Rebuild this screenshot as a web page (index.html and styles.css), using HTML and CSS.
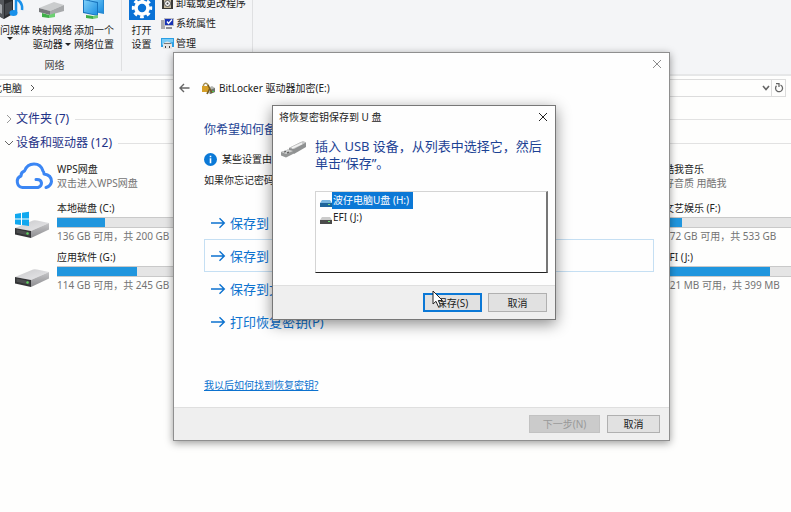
FILE: index.html
```html
<!DOCTYPE html>
<html lang="zh-CN">
<head>
<meta charset="utf-8">
<title>此电脑</title>
<link rel="stylesheet" href="styles.css">
</head>
<body>
<svg class="defs" aria-hidden="true">
  <defs>
    <linearGradient id="metal" x1="0" y1="0" x2="1" y2="1"><stop offset="0" stop-color="#c9c9cb"/><stop offset="1" stop-color="#e9e9eb"/></linearGradient>
    <linearGradient id="side" x1="0" y1="0" x2="0" y2="1"><stop offset="0" stop-color="#c6c6c8"/><stop offset="1" stop-color="#8d8d90"/></linearGradient>
    <linearGradient id="screen" x1="0" y1="0" x2="1" y2="1"><stop offset="0" stop-color="#7ed0fa"/><stop offset="1" stop-color="#1d8fe0"/></linearGradient>
    <symbol id="drive" viewBox="0 0 34 18">
      <path d="M0 8 18 0.5Q20 0 22 .6L34 3 16 11Z" fill="url(#metal)"/>
      <path d="M0 8 16 11V18L0 14.5Z" fill="#333436"/>
      <path d="M16 11 34 3V9.500L16 18Z" fill="url(#side)"/>
      <path d="M1.500 9.500 14.500 12.200V15.800L1.500 12.800Z" fill="#4d4f50"/>
      <circle cx="12.500" cy="13.500" r="1.200" fill="#5fd35f"/>
    </symbol>
    <symbol id="arrow" viewBox="0 0 16 12"><path d="M1 6H14M9.500 1.300 14.300 6 9.500 10.700" fill="none" stroke="currentColor" stroke-width="1.400"/></symbol>
    <symbol id="cross" viewBox="0 0 10 10"><path d="M1 1 9 9M9 1 1 9" fill="none" stroke="currentColor"/></symbol>
  </defs>
</svg>

<main class="explorer">
  <div class="ribbon">
    <section class="group network">
      <div class="tools">
        <button class="tool">
          <svg width="32" height="26" viewBox="0 0 32 26"><path d="M1 0H19V20L10 25 1 20Z" fill="#2b2d30"/><path d="M1 0 10 5V25L1 20Z" fill="#55585c"/><path d="M3 8 8 11V20L3 17Z" fill="#a5a8ac"/><path d="M11 10 18 7V18L11 22Z" fill="#45484c"/><path d="M22 4V19M22 5Q29 8 28 16" fill="none" stroke="#1991ea" stroke-width="2.500"/><ellipse cx="19.500" cy="19" rx="4" ry="3" fill="#1991ea"/></svg>
          <span>访问媒体</span><i class="caret"></i>
        </button>
        <button class="tool">
          <svg width="26" height="26" viewBox="0 0 26 26"><path d="M0 14 15 8 25 11 11 17Z" fill="#cacccd"/><path d="M0 14 11 17V21L0 18Z" fill="#77797c"/><path d="M11 17 25 11V17L11 21Z" fill="#a7a9ab"/><path d="M3 19 10 21V24L3 23Z" fill="#3fae48"/><path d="M10 21 16 19V23L10 24Z" fill="#6bd071"/></svg>
          <span>映射网络<br>驱动器 <i class="caret inline"></i></span>
        </button>
        <button class="tool">
          <svg width="26" height="26" viewBox="0 0 26 26"><path d="M8 3 23 5V20L8 17Z" fill="#2689d2"/><path d="M9 4 22 6V18L9 16Z" fill="url(#screen)"/><path d="M2 5 17 8V22L2 19Z" fill="#1874bd"/><path d="M3 6 16 9V21L3 18Z" fill="url(#screen)"/><path d="M5 21 12 22V25L5 24Z" fill="#3fae48"/><path d="M12 22 17 21V24L12 25Z" fill="#75cc79"/></svg>
          <span>添加一个<br>网络位置</span>
        </button>
      </div>
      <div class="caption">网络</div>
    </section>
    <section class="group system">
      <button class="tool">
        <svg width="26" height="26" viewBox="0 0 26 26"><path d="M0 0H26V26H0Z" fill="#0a72d6"/><circle cx="13" cy="14" r="6" fill="none" stroke="#fff" stroke-width="3.600"/><circle cx="13" cy="14" r="8.500" fill="none" stroke="#fff" stroke-width="3.400" stroke-dasharray="3.600 3.076" stroke-dashoffset="1.800"/></svg>
        <span>打开<br>设置</span>
      </button>
      <div class="links">
        <button class="link-tool"><svg width="13" height="13" viewBox="0 0 13 13"><path d="M1 0H12V12H1Z" fill="#3b3a36"/><path d="M3 2H10V11H3Z" fill="#c8bda0"/><circle cx="6.500" cy="6.500" r="3" fill="#f5f5f5" stroke="#555"/><circle cx="6.500" cy="6.500" r="1" fill="#444"/></svg>卸载或更改程序</button>
        <button class="link-tool"><svg width="13" height="13" viewBox="0 0 13 13"><path d="M0 3H4V12H0Z" fill="#a9a9ad"/><path d="M3 1H13V9H3Z" fill="#b7b8c0"/><path d="M4 2H12V8H4Z" fill="#1732b4"/><path d="M6 4.500 7.500 6.500 11 2.500" fill="none" stroke="#fff" stroke-width="1.300"/><path d="M5 10H11V12H5Z" fill="#8c8d94"/></svg>系统属性</button>
        <button class="link-tool"><svg width="13" height="13" viewBox="0 0 13 13"><path d="M0 1H13V10H0Z" fill="#2b9fe4"/><path d="M1 2H12V5L1 8Z" fill="#79cbf5"/><path d="M2 7Q6 2 11 7V12H2Z" fill="#e5e5e5"/><path d="M4 9H5V11H4ZM8 9H9V11H8Z" fill="#444"/><path d="M3 6H10V7H3Z" fill="#777"/></svg>管理</button>
      </div>
    </section>
  </div>

  <nav class="address">
    <span class="crumb">此电脑</span>
    <svg width="6" height="8" viewBox="0 0 6 8"><path d="M1 1 4 4 1 7" fill="none" stroke="#555"/></svg>
    <button class="drop" aria-label="历史"><svg width="8" height="6" viewBox="0 0 8 6"><path d="M1 1 4 4.500 7 1" fill="none" stroke="#666" stroke-width="1.600"/></svg></button>
    <button class="refresh" aria-label="刷新"><svg width="10" height="10" viewBox="0 0 10 10"><path d="M6.500 2A3.500 3.500 0 1 1 2.500 2.800M2 .7H5V4" fill="none" stroke="#666" stroke-width="1.300"/></svg></button>
  </nav>

  <h2 class="header"><svg width="10" height="10" viewBox="0 0 10 10"><path d="M3 1 7 5 3 9" fill="none" stroke="#999"/></svg>文件夹 (7)</h2>
  <h2 class="header"><svg width="10" height="10" viewBox="0 0 10 10"><path d="M1 3 5 7 9 3" fill="none" stroke="#666"/></svg>设备和驱动器 (12)</h2>

  <div class="drives">
    <article class="item">
      <svg width="38" height="28" viewBox="0 0 38 28"><path d="M15 25.500H7.500A6 6 0 0 1 6 14Q6 10 9.500 9Q12 2 19 2Q26 2 28 9Q29 10 29 12Q36.500 13 36.500 19.500Q36 24 31 25.500M14 25.500H23Q26.500 24.500 26.500 21Q26 17 21 17.500" fill="none" stroke="#3b86f4" stroke-width="3" stroke-linecap="round" stroke-linejoin="round"/></svg>
      <div class="info"><div class="name">WPS网盘</div><div class="note">双击进入WPS网盘</div></div>
    </article>
    <article class="item last">
      <div class="info"><div class="name">酷我音乐</div><div class="note">好音质 用酷我</div></div>
    </article>
    <article class="item">
      <svg class="disk" width="34" height="28" viewBox="0 0 34 28"><use href="#drive" y="9" width="34" height="18"/><path d="M0 3 6 2V7.500H0ZM7 1.800 14 .7V7.500H7ZM0 8.500H6V14L0 13.200ZM7 8.500H14V15L7 14Z" fill="#10a8ef"/></svg>
      <div class="info"><div class="name">本地磁盘 (C:)</div><div class="bar"><div class="fill" style="width:32%"></div></div><div class="note">136 GB 可用，共 200 GB</div></div>
    </article>
    <article class="item last">
      <div class="info"><div class="name">文艺娱乐 (F:)</div><div class="bar"><div class="fill" style="width:12%"></div></div><div class="note">472 GB 可用，共 533 GB</div></div>
    </article>
    <article class="item">
      <svg class="disk" width="34" height="28" viewBox="0 0 34 28"><use href="#drive" y="9" width="34" height="18"/></svg>
      <div class="info"><div class="name">应用软件 (G:)</div><div class="bar"><div class="fill" style="width:53%"></div></div><div class="note">114 GB 可用，共 245 GB</div></div>
    </article>
    <article class="item last">
      <div class="info"><div class="name">EFI (J:)</div><div class="bar"><div class="fill" style="width:70%"></div></div><div class="note">121 MB 可用，共 399 MB</div></div>
    </article>
  </div>
</main>

<section class="window wizard" role="dialog" aria-label="BitLocker 驱动器加密">
  <button class="close" aria-label="关闭"><svg width="10" height="10"><use href="#cross"/></svg></button>
  <header class="wizard-title">
    <button class="back" aria-label="返回"><svg width="11" height="10" viewBox="0 0 11 10"><path d="M10.500 5H1.500M5 1 1 5 5 9" fill="none" stroke="#666" stroke-width="1.400"/></svg></button>
    <svg width="13" height="13" viewBox="0 0 13 13"><path d="M4 7 10 4 13 6V10L8 12 4 10Z" fill="#b4b6b3"/><path d="M8 8 13 6V10L8 12Z" fill="#6d736d"/><path d="M1.500 5V3Q3.500-.5 6 3V5" fill="none" stroke="#a3905a" stroke-width="1.500"/><path d="M0 4H7V10H0Z" fill="#d59f27"/><path d="M6 3 10 11M8 6 5 12" stroke="#765d22" stroke-width="1.600"/><path d="M10 9H12V10H10Z" fill="#4bc64b"/></svg>
    <span>BitLocker 驱动器加密(E:)</span>
  </header>
  <div class="wizard-body">
    <h1>你希望如何备份恢复密钥?</h1>
    <p class="managed"><svg width="13" height="13" viewBox="0 0 13 13"><circle cx="6.500" cy="6.500" r="6.500" fill="#0b79d7"/><path d="M5.700 5.300H7.300V10.300H5.700ZM5.700 2.700H7.300V4.200H5.700Z" fill="#fff"/></svg>某些设置由系统管理员管理。</p>
    <p class="hint">如果你忘记密码或者丢失智能卡，可以使用恢复密钥访问驱动器。</p>
    <div class="options">
      <button class="option"><svg width="16" height="12"><use href="#arrow"/></svg>保存到 Microsoft 帐户(M)</button>
      <button class="option selected"><svg width="16" height="12"><use href="#arrow"/></svg>保存到 U 盘(U)</button>
      <button class="option"><svg width="16" height="12"><use href="#arrow"/></svg>保存到文件(F)</button>
      <button class="option"><svg width="16" height="12"><use href="#arrow"/></svg>打印恢复密钥(P)</button>
    </div>
    <a class="help" href="#">我以后如何找到恢复密钥?</a>
  </div>
  <footer class="wizard-footer"><button class="push next" disabled>下一步(N)</button><button class="push">取消</button></footer>
</section>

<section class="window picker" role="dialog" aria-label="将恢复密钥保存到 U 盘">
  <header class="picker-title"><span>将恢复密钥保存到 U 盘</span><button class="close-dark" aria-label="关闭"><svg width="10" height="10"><use href="#cross"/></svg></button></header>
  <div class="picker-body">
    <svg width="26" height="18" viewBox="0 0 26 18"><path d="M8 7 20 1Q22 0 25 1.500V6L13 13 8 11Z" fill="#8f9192"/><path d="M8 7 20 1Q22 0 25 1.500L13 8Z" fill="#c8c9c9"/><path d="M11 7 21 2.500" stroke="#f3f3f3" stroke-width="1.500"/><path d="M0 11 7 8.500 12 10V13L5 16.500 0 14.500Z" fill="#949696"/><path d="M0 11 7 8.500 12 10 5 13Z" fill="#cecfcf"/><path d="M3 11 5 10.500M6 12 8 11" stroke="#555" stroke-width="1.200"/></svg>
    <div class="picker-main">
      <h1>插入 USB 设备，从列表中选择它，然后单击“保存”。</h1>
      <ul class="devices" role="listbox" aria-label="USB 设备">
        <li role="option" aria-selected="true"><svg width="12" height="8" viewBox="0 0 12 8"><path d="M2 1H10L12 4H0Z" fill="#78b5df"/><path d="M0 4H12V8H0Z" fill="#1e659b"/><path d="M8 5H10V6H8Z" fill="#78dc7b"/></svg><span>波仔电脑U盘 (H:)</span></li>
        <li role="option" aria-selected="false"><svg width="12" height="8" viewBox="0 0 12 8"><path d="M2 1H10L12 4H0Z" fill="#cbcbcb"/><path d="M0 4H12V8H0Z" fill="#4b4b4b"/><path d="M8 5H10V6H8Z" fill="#6ddd71"/></svg><span>EFI (J:)</span></li>
      </ul>
    </div>
  </div>
  <footer class="picker-footer"><button class="push primary">保存(S)</button><button class="push">取消</button></footer>
</section>

<svg class="pointer" width="13" height="18" viewBox="0 0 13 18" aria-hidden="true"><path d="M1 1V14L4 11.300 6.300 16.500 8.500 15.500 6.300 10.500H10.500Z" fill="#fff" stroke="#222"/></svg>
</body>
</html>
```
FILE: styles.css
```css
* { box-sizing: border-box; }

body {
  margin: 0;
  min-height: 100vh;
  overflow: hidden;
  background: #fefefd;
  color: #222;
  font: 10px/14px "Noto Sans", "Noto Sans CJK SC", sans-serif;
}

h1, h2, p, ul { margin: 0; padding: 0; font-weight: 400; }
svg { flex: none; display: block; }
button { margin: 0; padding: 0; border: 0; background: none; color: inherit; font: inherit; }
.defs { position: absolute; width: 0; height: 0; }

/* Explorer */
.explorer { overflow: hidden; }

.ribbon {
  display: flex;
  height: 76px;
  padding-bottom: 3px;
  overflow: hidden;
  background: #f4f5f7;
  border-bottom: 2px solid #e6e7e8;
}
.group { border-right: 1px solid #dfe0e2; }
.network { margin-left: -11px; padding-right: 6px; }
.tools { display: flex; }
.tool {
  display: flex;
  flex-direction: column;
  align-items: center;
  width: 42px;
  margin-top: -6px;
  gap: 3px;
  white-space: nowrap;
}
.caret {
  margin-top: -3px;
  border: 3px solid transparent;
  border-top-color: #222;
  border-bottom: 0;
}
.caret.inline { display: inline-block; margin: 0 0 2px; }
.caption { padding: 7px 0 0 5px; text-align: center; color: #444; }
.system { display: flex; padding-right: 6px; }
.system .tool { width: 39px; }
.links { display: flex; flex-direction: column; gap: 6px; margin-top: -4px; }
.link-tool { display: flex; align-items: center; gap: 2px; }

.address {
  display: flex;
  align-items: center;
  height: 18px;
  margin: 3px 5px 10px 0;
  border: 1px solid #dcdcdc;
  border-left: 0;
}
.crumb { margin: 0 8px 0 -8px; }
.drop { margin-left: auto; padding-right: 1px; }
.refresh {
  display: flex;
  align-items: center;
  justify-content: center;
  align-self: stretch;
  width: 14px;
  border-left: 1px solid #dcdcdc;
}

.header {
  display: flex;
  align-items: center;
  gap: 2px;
  height: 24px;
  padding-left: 4px;
  color: #1e3287;
  font-size: 12px;
}
.header::after { content: ""; flex: 1; height: 1px; margin-left: 4px; background: #e2e2e2; }

.drives {
  display: grid;
  grid-template-columns: repeat(4, 202px);
  grid-template-rows: 42px;
  grid-auto-rows: 49px;
  margin-left: 15px;
}
.item { display: flex; align-items: center; gap: 4px; grid-column: 1; }
.item.last { grid-column: 4; padding-left: 43px; }
.disk { margin-top: 6px; }
.info { flex: none; width: 152px; white-space: nowrap; }
.item:not(.last) .info { margin: 0 8px 0 auto; }
.note { color: #747474; }
.bar { height: 11px; margin: 2px 0 1px; border: 1px solid #c9c9c9; border-left: 0; background: #e5e5e5; }
.fill { height: 100%; background: #2096de; }

/* Windows */
.window {
  position: absolute;
  display: flex;
  flex-direction: column;
  background: #fefefe;
  border: 1px solid #8f8f8f;
}
.push {
  width: 59px;
  height: 19px;
  background: #e1e1e1;
  border: 1px solid #b0b0b0;
}
.push.primary { border: 2px solid #0b78d6; }
.push:disabled { color: #999; background: #cbcbcb; border-color: #c2c2c2; }

.wizard {
  left: 173px;
  top: 52px;
  width: 497px;
  height: 389px;
  box-shadow: 0 2px 8px rgba(0, 0, 0, .4);
}
.close { align-self: flex-end; padding: 6px 7px; color: #8c8c8c; }
.wizard-title { display: flex; align-items: center; height: 26px; padding-left: 5px; }
.wizard-title span { margin-left: 4px; }
.back { margin-right: 12px; }
.wizard-body { flex: 1; padding: 20px 15px 0 30px; }
.wizard h1 { color: #1c4294; font-size: 12px; line-height: 18px; }
.managed { display: flex; align-items: center; gap: 5px; margin-top: 13px; }
.hint { margin-top: 7px; }
.options { display: flex; flex-direction: column; margin-top: 19px; }
.option {
  display: flex;
  align-items: center;
  gap: 4px;
  height: 33px;
  padding-left: 5px;
  border: 1px solid transparent;
  color: #0c72cf;
  font-size: 13px;
}
.option.selected { border-color: #c5dff3; }
.help { display: inline-block; margin-top: 40px; color: #0c72cf; }
.wizard-footer {
  display: flex;
  justify-content: flex-end;
  gap: 7px;
  height: 33px;
  padding: 7px 9px;
  background: #efefef;
  border-top: 1px solid #dfdfdf;
}
.wizard-footer .push { width: 53px; height: 18px; }
.wizard-footer .next { width: 71px; }

.picker {
  left: 272px;
  top: 105px;
  width: 284px;
  height: 215px;
  border-color: #777;
  box-shadow: 0 4px 14px rgba(0, 0, 0, .45);
}
.picker-title { display: flex; align-items: center; justify-content: space-between; height: 22px; padding: 0 7px 0 6px; }
.picker-body { display: flex; flex: 1; align-items: flex-start; gap: 8px; padding: 10px 7px 0 8px; }
.picker-body > svg { margin-top: 3px; }
.picker-main { flex: 1; min-width: 0; }
.picker h1 { color: #1c4294; font-size: 13px; line-height: 17px; }
.devices {
  height: 82px;
  margin-top: 19px;
  padding-left: 4px;
  list-style: none;
  border: 1px solid #d4d4d4;
  border-right: 2px solid #777;
  border-bottom: 1px solid #222;
}
.devices li { display: flex; align-items: center; height: 17px; }
.devices li svg { margin-top: 4px; }
.devices span { padding: 1px 4px 2px 1px; }
.devices [aria-selected="true"] span { color: #fff; background: #0b78d6; }
.picker-footer {
  display: flex;
  justify-content: flex-end;
  gap: 6px;
  height: 34px;
  padding: 7px 8px;
  background: #efefef;
  border-top: 1px solid #dfdfdf;
}

.pointer { position: absolute; left: 432px; top: 290px; }
```
